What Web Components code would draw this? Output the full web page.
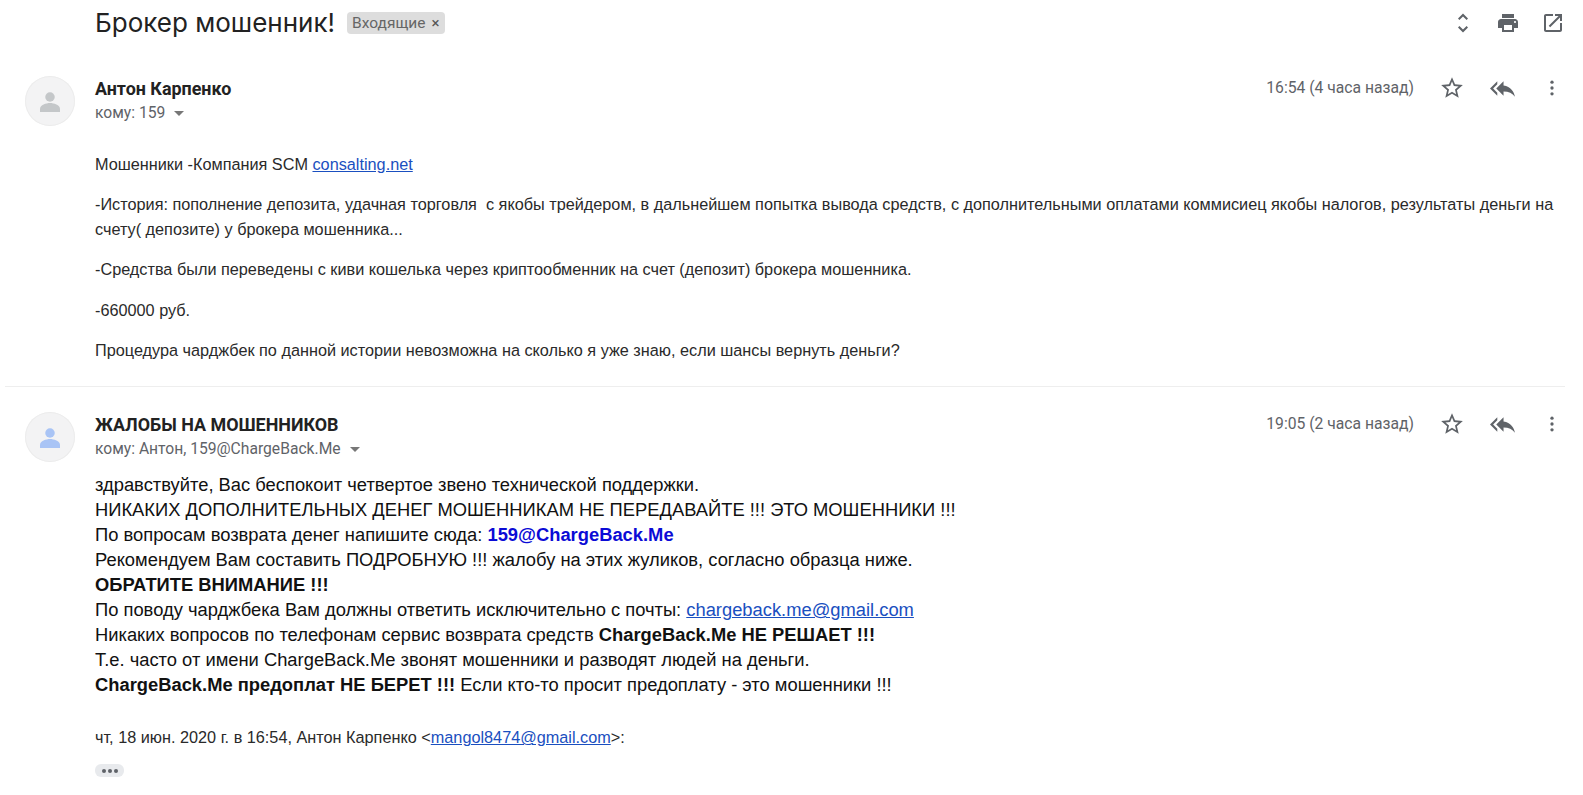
<!DOCTYPE html>
<html lang="ru"><head><meta charset="utf-8"><title>Брокер мошенник!</title>
<style>html,body{margin:0;background:#fff;overflow:hidden}body{width:1583px;height:795px;font-family:"Liberation Sans",Arial,sans-serif}</style>
</head><body>
<mail-thread>
  <mail-subject label="Входящие">Брокер мошенник!</mail-subject>
  <mail-message name="Антон Карпенко" to="кому: 159" time="16:54 (4 часа назад)" tint="#c4c7c9" divider>
    <div style="font-size:16.25px;line-height:24.4px;color:#2a2a2a;padding:26px 0 24px">
      <p style="margin:0 0 16px">Мошенники -Компания SCM <a href="#" style="color:#1a4fc0">consalting.net</a></p>
      <p style="margin:0 0 16px">-История: пополнение депозита, удачная торговля&nbsp; с якобы трейдером, в дальнейшем попытка вывода средств, с дополнительными оплатами коммисиец якобы налогов, результаты деньги на счету( депозите) у брокера мошенника...</p>
      <p style="margin:0 0 16px">-Средства были переведены с киви кошелька через криптообменник на счет (депозит) брокера мошенника.</p>
      <p style="margin:0 0 16px">-660000 руб.</p>
      <p style="margin:0">Процедура чарджбек по данной истории невозможна на сколько я уже знаю, если шансы вернуть деньги?</p>
    </div>
  </mail-message>
  <mail-message name="ЖАЛОБЫ НА МОШЕННИКОВ" to="кому: Антон, 159@ChargeBack.Me" time="19:05 (2 часа назад)" tint="#a9c4f5" style="padding-top:25px">
    <div style="font-size:18.35px;line-height:25px;color:#111;padding-top:10px">
      здравствуйте, Вас беспокоит четвертое звено технической поддержки.<br>
      НИКАКИХ ДОПОЛНИТЕЛЬНЫХ ДЕНЕГ МОШЕННИКАМ НЕ ПЕРЕДАВАЙТЕ !!! ЭТО МОШЕННИКИ !!!<br>
      По вопросам возврата денег напишите сюда: <b style="color:#0b0bd6">159@ChargeBack.Me</b><br>
      Рекомендуем Вам составить ПОДРОБНУЮ !!! жалобу на этих жуликов, согласно образца ниже.<br>
      <b>ОБРАТИТЕ ВНИМАНИЕ !!!</b><br>
      По поводу чарджбека Вам должны ответить исключительно с почты: <a href="#" style="color:#1a4fc0">chargeback.me@gmail.com</a><br>
      Никаких вопросов по телефонам сервис возврата средств <b>ChargeBack.Me НЕ РЕШАЕТ !!!</b><br>
      Т.е. часто от имени ChargeBack.Me звонят мошенники и разводят людей на деньги.<br>
      <b>ChargeBack.Me предоплат НЕ БЕРЕТ !!!</b> Если кто-то просит предоплату - это мошенники !!!
    </div>
    <div style="font-size:16.25px;line-height:20px;color:#2a2a2a;margin-top:30px">чт, 18 июн. 2020 г. в 16:54, Антон Карпенко &lt;<a href="#" style="color:#1a4fc0">mangol8474@gmail.com</a>&gt;:</div>
    <mail-more></mail-more>
  </mail-message>
</mail-thread>
<script>
const ICONS={
 expand:'<path d="M12 5.8 7 10.8l1.4 1.4L12 8.6l3.6 3.6 1.4-1.4z" transform="translate(0,-3.2)"/><path d="M12 18.2l5-5-1.4-1.4-3.6 3.6-3.6-3.6L7 13.2z" transform="translate(0,3.2)"/>',
 print:'<path d="M19 8H5c-1.66 0-3 1.34-3 3v6h4v4h12v-4h4v-6c0-1.66-1.34-3-3-3zm-3 11H8v-5h8v5zm3-7c-.55 0-1-.45-1-1s.45-1 1-1 1 .45 1 1-.45 1-1 1zm-1-9H6v4h12V3z"/>',
 open:'<path d="M19 19H5V5h7V3H5c-1.11 0-2 .9-2 2v14c0 1.1.89 2 2 2h14c1.1 0 2-.9 2-2v-7h-2v7zM14 3v2h3.59l-9.83 9.83 1.41 1.41L19 6.41V10h2V3h-7z"/>',
 star:'<path d="M22 9.24l-7.19-.62L12 2 9.19 8.63 2 9.24l5.46 4.73L5.82 21 12 17.27 18.18 21l-1.63-7.03L22 9.24zM12 15.4l-3.76 2.27 1-4.28-3.32-2.88 4.38-.38L12 6.1l1.71 4.04 4.38.38-3.32 2.88 1 4.28L12 15.4z"/>',
 replyall:'<path d="M7 8V5l-7 7 7 7v-3l-4-4 4-4zm6 1V5l-7 7 7 7v-4.1c5 0 8.5 1.6 11 5.1-1-5-4-10-11-11z"/>',
 more:'<circle cx="12" cy="5" r="2"/><circle cx="12" cy="12" r="2"/><circle cx="12" cy="19" r="2"/>',
 person:'<circle cx="12" cy="8.8" r="3.8"/><path d="M4 20.8v-2.6c0-2.9 5-4.6 8-4.6s8 1.7 8 4.6v2.6z"/>'
};
class MailIcon extends HTMLElement{
 connectedCallback(){
  const s=this.getAttribute('size')||24,c=this.getAttribute('color')||'#5f6368';
  this.attachShadow({mode:'open'}).innerHTML=`<style>:host{display:inline-flex;flex:none;align-items:center;justify-content:center}svg{display:block}</style><svg width="${s}" height="${s}" viewBox="0 0 24 24" fill="${c}">${ICONS[this.getAttribute('name')]}</svg>`;
 }
}
customElements.define('mail-icon',MailIcon);
class MailThread extends HTMLElement{
 constructor(){super();this.attachShadow({mode:'open'}).innerHTML=`<style>:host{display:block;width:1583px;height:795px;overflow:hidden}</style><slot></slot>`}
}
customElements.define('mail-thread',MailThread);
class MailSubject extends HTMLElement{
 connectedCallback(){
  this.attachShadow({mode:'open'}).innerHTML=`<style>
  :host{display:flex;align-items:center;height:46px;padding:0 0 0 95px;box-sizing:border-box}
  h1{margin:0;font:400 26px/46px "Inter",sans-serif;color:#222}
  .chip{display:inline-flex;align-items:center;gap:6px;height:22px;margin-left:12px;padding:0 6px 0 5px;border-radius:4px;background:#dddddd;color:#666;font:15.5px "Roboto",sans-serif}
  .x{font-size:15px;color:#555}
  .tools{margin-left:auto;display:flex;gap:21px;padding-right:18px;align-items:center}
  </style><h1><slot></slot></h1><span class="chip">${this.getAttribute('label')}<span class="x">×</span></span>
  <div class="tools"><mail-icon name="expand"></mail-icon><mail-icon name="print"></mail-icon><mail-icon name="open"></mail-icon></div>`;
 }
}
customElements.define('mail-subject',MailSubject);
class MailMessage extends HTMLElement{
 connectedCallback(){
  const g=n=>this.getAttribute(n);
  this.attachShadow({mode:'open'}).innerHTML=`<style>
  :host{display:block;position:relative;padding:30px 0 0 25px;box-sizing:border-box}
  .row{display:flex;gap:20px}
  .av{width:50px;height:50px;border-radius:50%;background:#f3f3f4;box-shadow:inset 0 0 0 1px #ececec;display:flex;align-items:center;justify-content:center;flex:none}
  .main{flex:1;min-width:0;padding-right:27px}
  .head{display:flex;height:50px;align-items:flex-start}
  .who{flex:1}
  .name{font:700 17.9px/24px "Roboto",sans-serif;color:#222;padding-top:1px}
  .to{font:15.65px/22px "Roboto",sans-serif;color:#5f6368;margin-top:1px;display:flex;align-items:center}
  .tri{width:0;height:0;border:5px solid transparent;border-top-color:#777;border-bottom:0;margin-left:9px;margin-top:1px}
  .time{font:15.7px/24px "Roboto",sans-serif;color:#5f6368;white-space:nowrap}
  .acts{display:flex;align-items:center;height:24px;margin-left:25px;gap:25px;margin-right:-6px}
  .acts mail-icon[name=more]{margin-left:2px}
  .div{height:1px;background:#eeeeee;margin:0 18px 0 -20px}
  </style><div class="row"><div class="av"><mail-icon name="person" color="${g('tint')}" size="30"></mail-icon></div>
  <div class="main"><div class="head"><div class="who"><div class="name">${g('name')}</div><div class="to">${g('to')}<span class="tri"></span></div></div>
  <div class="time">${g('time')}</div><div class="acts"><mail-icon name="star" size="26"></mail-icon><mail-icon name="replyall" size="25"></mail-icon><mail-icon name="more" size="20"></mail-icon></div></div>
  <slot></slot></div></div>${this.hasAttribute('divider')?'<div class="div"></div>':''}`;
 }
}
customElements.define('mail-message',MailMessage);
class MailMore extends HTMLElement{
 constructor(){super();this.attachShadow({mode:'open'}).innerHTML=`<style>:host{display:flex;width:29px;height:13px;margin-top:17px;background:#e8eaed;border-radius:6px;align-items:center;justify-content:center;gap:2px}i{width:4px;height:4px;border-radius:50%;background:#5f6368}</style><i></i><i></i><i></i>`}
}
customElements.define('mail-more',MailMore);
</script>
</body></html>
